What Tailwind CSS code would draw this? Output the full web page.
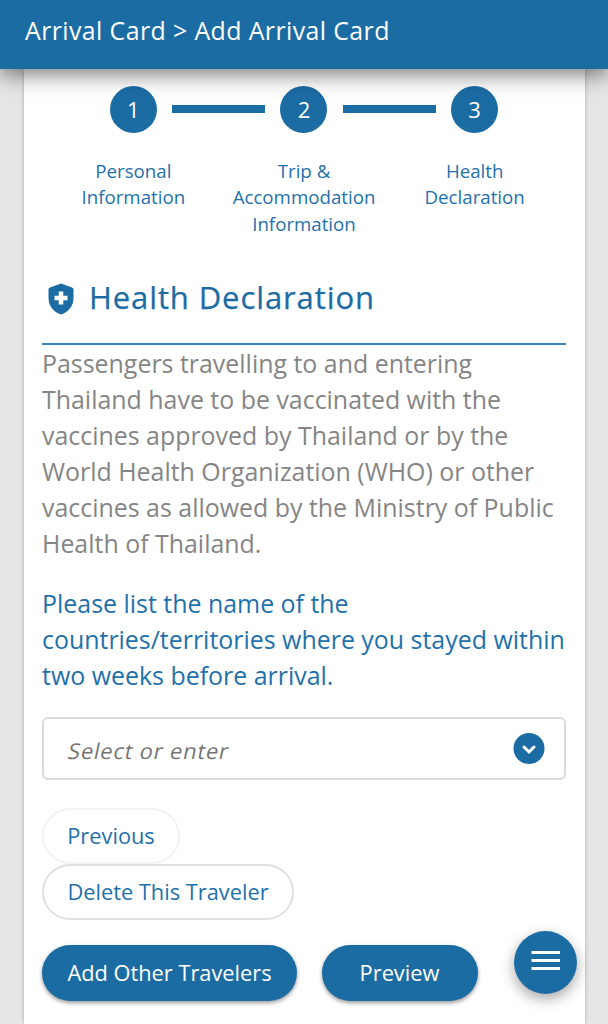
<!DOCTYPE html>
<html lang="en">
    <head>
        <meta charset="UTF-8" />
        <meta name="viewport" content="width=device-width, initial-scale=1.0" />
        <title>Arrival Card</title>
        <script src="https://cdn.jsdelivr.net/npm/@tailwindcss/browser@4"></script>
    </head>
    <body
        class="bg-[#e6e6e6] h-screen overflow-hidden flex flex-col font-['Open_Sans',sans-serif] text-[#1f71ab]"
    >
        <header
            class="relative z-10 h-[69px] shrink-0 bg-[#1c6ca4] px-[25px] pt-[12px] text-[24.9px] leading-9 tracking-[0.4px] text-white shadow-[0_6px_20px_rgba(0,0,0,0.5)]"
        >
            Arrival Card &gt; Add Arrival Card
        </header>
        <main
            class="mx-[23.5px] flex-1 bg-white px-[18.5px] pt-[17px] shadow-[0_0_4px_rgba(0,0,0,0.25)]"
        >
            <ol
                class="mx-[6px] grid grid-cols-3 text-center text-[18.7px] leading-[26.3px]"
            >
                <li class="relative flex flex-col items-center">
                    <span
                        class="mb-[25px] flex size-[47px] items-center justify-center rounded-full bg-[#1c6ca4] text-[22px] text-white"
                        >1</span
                    >
                    <span class="absolute left-[124px] top-[18.5px] h-2 w-[93px] bg-[#1c6ca4]"></span>
                    Personal<br />Information
                </li>
                <li class="relative flex flex-col items-center">
                    <span
                        class="mb-[25px] flex size-[47px] items-center justify-center rounded-full bg-[#1c6ca4] text-[22px] text-white"
                        >2</span
                    >
                    <span class="absolute left-[124px] top-[18.5px] h-2 w-[93px] bg-[#1c6ca4]"></span>
                    Trip &amp;<br />Accommodation<br />Information
                </li>
                <li class="flex flex-col items-center">
                    <span
                        class="mb-[25px] flex size-[47px] items-center justify-center rounded-full bg-[#1c6ca4] text-[22px] text-white"
                        >3</span
                    >
                    Health<br />Declaration
                </li>
            </ol>
            <h1
                class="mt-[38.1px] flex h-[70px] items-start border-b-2 border-[#3d85b8] pl-1.5 text-[31px] leading-[44px] tracking-[0.9px] text-[#1c6ca4] [-webkit-text-stroke:0.25px_#1c6ca4]"
            >
                <svg class="mt-[8px] mr-[15px] h-[32px] w-[26px]" viewBox="0 0 26 32" fill="none">
                    <path
                        d="M13 .5 24 4.4Q25.5 5 25.5 6.5V15C25.5 23 20 29.5 13 31.5 6 29.5.5 23 .5 15V6.5Q.5 5 2 4.4Z"
                        fill="#1c6ca4"
                    />
                    <path d="M13 8.5v13M6.5 15h13" stroke="white" stroke-width="4.6" />
                </svg>
                Health Declaration
            </h1>
            <p class="mt-[0.5px] text-[24.93px] leading-[36px] whitespace-nowrap text-[#858585]">
                Passengers travelling to and entering<br />
                Thailand have to be vaccinated with the<br />
                vaccines approved by Thailand or by the<br />
                World Health Organization (WHO) or other<br />
                vaccines as allowed by the Ministry of Public<br />
                Health of Thailand.
            </p>
            <p class="mt-[24px] text-[24.93px] leading-[36px] whitespace-nowrap">
                Please list the name of the<br />
                countries/territories where you stayed within<br />
                two weeks before arrival.
            </p>
            <div
                class="mt-[24px] flex h-[63px] items-center justify-between rounded-md border-2 border-[#dadada] pr-[19.5px] pl-[25px]"
            >
                <span class="-skew-x-12 pt-[5px] text-[21.8px] tracking-[0.85px] text-[#747474]"
                    >Select or enter</span
                >
                <svg class="size-8" viewBox="0 0 32 32" fill="none">
                    <circle cx="16" cy="15.5" r="15.5" fill="#1c6ca4" />
                    <path
                        d="m11 14 5 5 5-5"
                        stroke="white"
                        stroke-width="3"
                        stroke-linecap="round"
                    />
                </svg>
            </div>
            <div class="mt-[28px] flex flex-col items-start text-[21.8px]">
                <button class="h-14 w-[138px] rounded-full border-2 border-[#f2f2f2]">Previous</button>
                <button class="h-14 w-[252px] rounded-full border-2 border-[#e0e0e0]">
                    Delete This Traveler
                </button>
            </div>
            <div class="mt-[25px] flex gap-[24.5px] text-[21.8px] text-white">
                <button class="h-14 w-[255px] rounded-full bg-[#1c6ca4] shadow-[0_2px_4px_rgba(0,0,0,0.4)]">
                    Add Other Travelers
                </button>
                <button class="h-14 w-[156px] rounded-full bg-[#1c6ca4] shadow-[0_2px_4px_rgba(0,0,0,0.4)]">
                    Preview
                </button>
            </div>
        </main>
        <button
            class="fixed top-[931px] left-[514px] size-[63px] rounded-full bg-[#1c6ca4] shadow-[0_5px_14px_rgba(0,0,0,0.35)]"
        >
            <svg class="size-full" viewBox="0 0 63 63" fill="none">
                <path d="M17.5 21.5h28.5M17.5 29.5h28.5M17.5 37.5h28.5" stroke="white" stroke-width="3" />
            </svg>
        </button>
    </body>
</html>
